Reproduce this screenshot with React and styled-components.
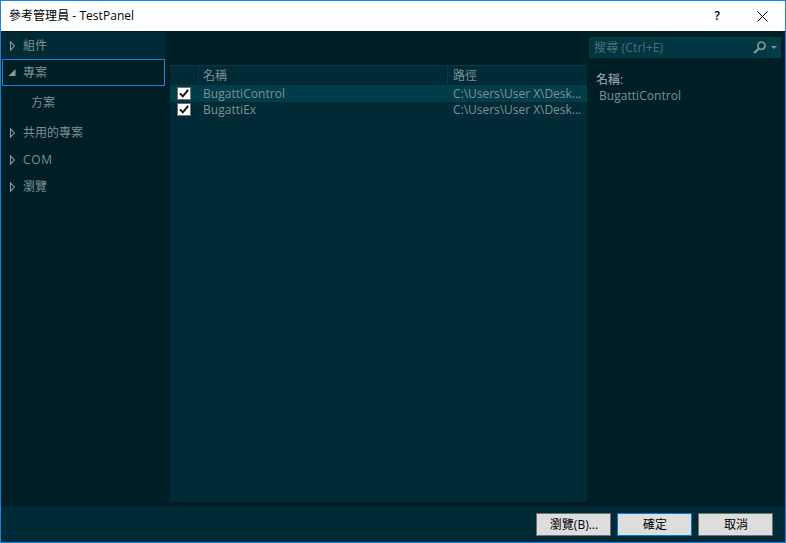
import React from "react";
import styled, { createGlobalStyle } from "styled-components";

const Global = createGlobalStyle`
  * { box-sizing: border-box; }
  body { margin: 0; background: #001e26; }
`;

const Window = styled.div`
  width: 786px;
  height: 543px;
  display: flex;
  flex-direction: column;
  border: 1px solid #1883d7;
  background: #001e26;
  color: #7d9194;
  font: 12px/16px "Open Sans", "Noto Sans CJK TC", sans-serif;
  white-space: nowrap;
  overflow: hidden;
`;

const TitleBar = styled.header`
  height: 30px;
  flex: none;
  display: flex;
  align-items: center;
  padding: 0 17px 0 8px;
  background: #fff;
  color: #000;
`;

const Title = styled.h1`
  margin: 0;
  flex: 1;
  font: inherit;
  letter-spacing: 0.04px;
`;

const TitleButton = styled.button`
  display: flex;
  padding: 0;
  margin-left: ${(p) => p.$gap || "0"};
  border: 0;
  background: none;
  color: #000;
  font: 600 12px/16px "Open Sans", sans-serif;
`;

const Body = styled.main`
  flex: 1;
  min-height: 0;
  display: flex;
`;

const Sidebar = styled.nav`
  width: 169px;
  flex: none;
  padding: 1px 5px 0 1px;
`;

const NavItem = styled.div`
  height: 27px;
  display: flex;
  align-items: center;
  padding-left: 5px;
  border: 1px solid ${(p) => (p.$selected ? "#1f86d6" : "transparent")};
  background: ${(p) => (p.$raised ? "#002b36" : "transparent")};
  letter-spacing: ${(p) => p.$spacing || "0"};
`;

const SubItem = styled.div`
  height: 33px;
  padding: 9px 0 0 29px;
`;

const Arrow = styled.svg`
  width: 8px;
  height: 10px;
  flex: none;
  margin-right: 7px;
`;

const ListColumn = styled.section`
  width: 418px;
  flex: none;
  padding: 34px 1px 5px 0;
  display: flex;
`;

const List = styled.div`
  flex: 1;
  background: #002b36;
`;

const HeaderRow = styled.div`
  height: 20px;
  display: grid;
  grid-template-columns: 28px 249px 1fr;
  border-top: 1px solid #003d49;
`;

const HeaderCell = styled.div`
  padding: 2px 0 0 ${(p) => p.$inset || "0"};
  border-left: ${(p) => (p.$inset ? "1px solid #003d49" : "0")};
`;

const Row = styled.div`
  height: ${(p) => (p.$active ? "17px" : "16px")};
  padding-top: ${(p) => (p.$active ? "1px" : "0")};
  display: grid;
  grid-template-columns: 33px 250px 1fr;
  background: ${(p) => (p.$active ? "#003d49" : "transparent")};
`;

const Cell = styled.div`
  letter-spacing: ${(p) => p.$spacing || "0.04px"};
`;

const CheckBox = styled.svg`
  display: block;
  width: 14px;
  height: 13px;
  margin: 1px 0 0 7px;
`;

const Details = styled.aside`
  flex: 1;
  padding: 6px 4px 0 1px;
`;

const Search = styled.div`
  height: 21px;
  display: flex;
  align-items: center;
  padding-left: 4px;
  background: #003641;
  border: 1px solid #003d49;
  color: #4d7078;
`;

const SearchText = styled.span`
  flex: 1;
  letter-spacing: 0.15px;
`;

const Dropdown = styled.div`
  width: 13px;
  height: 19px;
  display: flex;
  align-items: center;
  justify-content: center;
  background: #003d49;
`;

const Property = styled.dl`
  margin: 14px 0 0 7px;
  line-height: 16px;
`;

const Term = styled.dt`
  color: #8b9da0;
  font-weight: 500;
`;

const Description = styled.dd`
  margin: 0 0 0 3px;
  letter-spacing: 0.04px;
`;

const Footer = styled.footer`
  height: 35px;
  flex: none;
  display: flex;
  justify-content: flex-end;
  gap: 6px;
  padding: 6px 12px 0 0;
  background: #002b36;
`;

const Button = styled.button`
  width: 75px;
  height: 23px;
  padding: 0 0 0 1px;
  border: 1px solid ${(p) => (p.$primary ? "#0078d7" : "#707070")};
  background: #ddd;
  color: #000;
  font: 12px/16px "Open Sans", "Noto Sans CJK TC", sans-serif;
`;

function Expander({ open }) {
  return (
    <Arrow viewBox="0 0 8 10">
      {open ? (
        <path d="M7.5 1v7H.5z" fill="#8a9a9c" />
      ) : (
        <path d="M2.5 .8v8.4L6.4 5z" fill="none" stroke="#8a9a9c" strokeWidth="1.1" />
      )}
    </Arrow>
  );
}

function Check() {
  return (
    <CheckBox viewBox="0 0 14 13">
      <rect x=".5" y=".5" width="13" height="12" fill="#fff" stroke="#707070" />
      <path d="M3 6.3L5.8 9.4L11.2 2.8" fill="none" stroke="#111" strokeWidth="1.9" />
    </CheckBox>
  );
}

const files = ["BugattiControl", "BugattiEx"];

export default function App() {
  return (
    <Window>
      <Global />
      <TitleBar>
        <Title>參考管理員 - TestPanel</Title>
        <TitleButton>?</TitleButton>
        <TitleButton $gap="37px" aria-label="Close">
          <svg width="11" height="11" viewBox="0 0 11 11">
            <path d="M.5 .5l10 10M10.5 .5l-10 10" stroke="#000" />
          </svg>
        </TitleButton>
      </TitleBar>
      <Body>
        <Sidebar>
          <NavItem $raised><Expander />組件</NavItem>
          <NavItem $selected><Expander open />專案</NavItem>
          <SubItem>方案</SubItem>
          <NavItem><Expander />共用的專案</NavItem>
          <NavItem $spacing="0.7px"><Expander />COM</NavItem>
          <NavItem><Expander />瀏覽</NavItem>
        </Sidebar>
        <ListColumn>
          <List>
            <HeaderRow>
              <HeaderCell />
              <HeaderCell $inset="4px">名稱</HeaderCell>
              <HeaderCell $inset="5px">路徑</HeaderCell>
            </HeaderRow>
            {files.map((name, i) => (
              <Row key={name} $active={i === 0}>
                <Check />
                <Cell>{name}</Cell>
                <Cell $spacing="-0.03px">C:\Users\User X\Desk...</Cell>
              </Row>
            ))}
          </List>
        </ListColumn>
        <Details>
          <Search>
            <SearchText>搜尋 (Ctrl+E)</SearchText>
            <svg width="14" height="13" viewBox="0 0 14 13">
              <circle cx="8.5" cy="4.7" r="3.6" fill="none" stroke="#7d9194" strokeWidth="1.8" />
              <path d="M6 7.3L1.2 12" stroke="#7d9194" strokeWidth="2.4" />
            </svg>
            <Dropdown>
              <svg width="6" height="3" viewBox="0 0 6 3"><path d="M0 0h6L3 3z" fill="#7d9194" /></svg>
            </Dropdown>
          </Search>
          <Property>
            <Term>名稱:</Term>
            <Description>BugattiControl</Description>
          </Property>
        </Details>
      </Body>
      <Footer>
        <Button>瀏覽(B)...</Button>
        <Button $primary>確定</Button>
        <Button>取消</Button>
      </Footer>
    </Window>
  );
}
